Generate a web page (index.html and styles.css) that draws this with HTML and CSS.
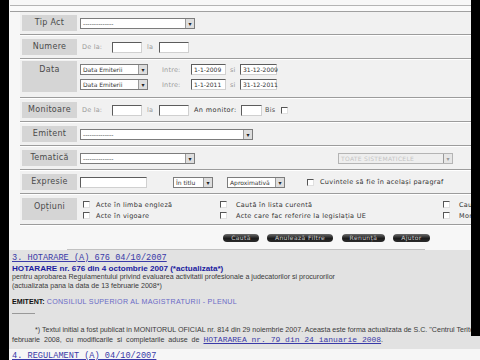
FILE: index.html
```html
<!DOCTYPE html>
<html lang="ro">
<head>
<meta charset="utf-8">
<title>Căutare acte</title>
<link rel="stylesheet" href="styles.css">
</head>
<body>
<div class="edge-right"></div>
<div class="page">
  <div class="top">
    <div class="topbar"></div>
    <div class="form">
      <div class="row">
        <div class="lbl">Tip Act</div>
        <div class="ctl">
          <div class="sel w115"><span class="sv">--------------</span><span class="arr">&#9662;</span></div>
        </div>
      </div>
      <div class="row">
        <div class="lbl">Numere</div>
        <div class="ctl">
          <span class="t t-dela">De la:</span><span class="inp w30"></span>
          <span class="t t-la">la</span><span class="inp w30"></span>
        </div>
      </div>
      <div class="row row-data">
        <div class="lbl lbl-tall">Data</div>
        <div class="ctl ctl-col">
          <div class="sub">
            <div class="sel w68"><span class="sv">Data Emiterii</span><span class="arr">&#9662;</span></div>
            <span class="t t-intre">Intre:</span><span class="inp w35">1-1-2009</span>
            <span class="t t-si">si</span><span class="inp w37">31-12-2009</span>
          </div>
          <div class="sub">
            <div class="sel w68"><span class="sv">Data Emiterii</span><span class="arr">&#9662;</span></div>
            <span class="t t-intre">Intre:</span><span class="inp w35">1-1-2011</span>
            <span class="t t-si">si</span><span class="inp w37">31-12-2011</span>
          </div>
        </div>
      </div>
      <div class="row">
        <div class="lbl">Monitoare</div>
        <div class="ctl">
          <span class="t t-dela">De la:</span><span class="inp w30"></span>
          <span class="t t-la">la</span><span class="inp w30"></span>
          <span class="t t-an">An monitor:</span><span class="inp w21"></span>
          <span class="t t-bis">Bis</span><span class="cb"></span>
        </div>
      </div>
      <div class="row">
        <div class="lbl">Emitent</div>
        <div class="ctl">
          <div class="sel w173"><span class="sv">--------------</span><span class="arr">&#9662;</span></div>
        </div>
      </div>
      <div class="row">
        <div class="lbl">Tematică</div>
        <div class="ctl">
          <div class="sel w115"><span class="sv">--------------</span><span class="arr">&#9662;</span></div>
          <div class="sel sel-off w115 m-sist"><span class="sv">TOATE SISTEMATICELE</span><span class="arr">&#9662;</span></div>
        </div>
      </div>
      <div class="row">
        <div class="lbl">Expresie</div>
        <div class="ctl">
          <span class="inp w67"></span>
          <div class="sel w40 m-titlu"><span class="sv">În titlu</span><span class="arr">&#9662;</span></div>
          <div class="sel w58 m-aprox"><span class="sv">Aproximativă</span><span class="arr">&#9662;</span></div>
          <span class="cb m-cb"></span><span class="t t-par">Cuvintele să fie în același paragraf</span>
        </div>
      </div>
      <div class="row">
        <div class="lbl lbl-opt">Opțiuni</div>
        <div class="ctl opts">
          <div class="opt"><span class="cb"></span><span class="t">Acte în limba engleză</span></div>
          <div class="opt"><span class="cb"></span><span class="t">Caută în lista curentă</span></div>
          <div class="opt"><span class="cb"></span><span class="t">Caută</span></div>
          <div class="opt"><span class="cb"></span><span class="t">Acte în vigoare</span></div>
          <div class="opt"><span class="cb"></span><span class="t">Acte care fac referire la legislația UE</span></div>
          <div class="opt"><span class="cb"></span><span class="t">Mon</span></div>
        </div>
      </div>
      <div class="btns">
        <span class="btn b-cauta">Caută</span>
        <span class="btn b-anul">Anulează Filtre</span>
        <span class="btn b-ren">Renunță</span>
        <span class="btn b-aj">Ajutor</span>
      </div>
    </div>
    <div class="hline"></div>
  </div>
  <div class="results">
    <div class="mono-link">3. HOTARARE (A) 676 04/10/2007</div>
    <div class="title">HOTARARE nr. 676 din 4 octombrie 2007 (*actualizata*)</div>
    <div class="txt">pentru aprobarea Regulamentului privind evaluarea activitatii profesionale a judecatorilor si procurorilor</div>
    <div class="txt">(actualizata pana la data de 13 februarie 2008*)</div>
    <div class="txt emit"><b>EMITENT:</b> <span class="emit-name">CONSILIUL SUPERIOR AL MAGISTRATURII - PLENUL</span></div>
    <div class="short-rule"></div>
    <div class="txt note">*) Textul initial a fost publicat in MONITORUL OFICIAL nr. 814 din 29 noiembrie 2007. Aceasta este forma actualizata de S.C. "Centrul Terito</div>
    <div class="txt note2">februarie 2008, cu modificarile si completarile aduse de <span class="mono-small">HOTARAREA nr. 79 din 24 ianuarie 2008</span>.</div>
  </div>
  <div class="next">
    <div class="mono-link">4. REGULAMENT (A) 04/10/2007</div>
  </div>
</div>
</body>
</html>
```
FILE: styles.css
```css
* { box-sizing: border-box; }
html, body { margin: 0; padding: 0; }
body {
  width: 480px;
  height: 360px;
  overflow: hidden;
  background: #000;
  position: relative;
  font-family: "DejaVu Sans", Verdana, sans-serif;
  color: #333;
}
.edge-right {
  position: absolute;
  top: 0;
  right: 0;
  width: 9px;
  height: 336px;
  background: #000;
  z-index: 5;
}
.page {
  margin-left: 9px;
  width: 471px;
  background: #f4f4f4;
}
.top {
  height: 250px;
  background: #f7f7f7;
  padding-top: 5px;
}
.topbar {
  margin-left: 1px;
  height: 7px;
  border-top: 1px solid #b4b4b4;
  border-bottom: 1px solid #a0a0a0;
  background: #fafafa;
}
.form { margin-left: 11px; background: #f1f1f1; }
.row {
  display: flex;
  align-items: stretch;
  padding: 3px 0 3px 2px;
  border-bottom: 1px solid #9c9c9c;
  box-shadow: 0 1px 0 #ffffff;
  margin-bottom: 1px;
}
.row-data { padding-top: 1px; }
.lbl {
  width: 55px;
  min-height: 16px;
  background: #d5d5d5;
  color: #4a4a4a;
  font-size: 8px;
  letter-spacing: 0.3px;
  line-height: 15px;
  text-align: center;
  flex: none;
}
.lbl-tall { height: 31px; padding-top: 1px; }
.lbl-opt { height: 22px; padding-top: 1px; }
.ctl {
  margin-left: 3px;
  display: flex;
  align-items: center;
  flex: 1;
  min-width: 0;
}
.ctl-col { flex-direction: column; align-items: flex-start; padding-top: 3px; }
.sub { display: flex; align-items: center; height: 11px; margin-bottom: 4px; }
.t {
  font-size: 6.5px;
  color: #9a9a9a;
  white-space: nowrap;
  letter-spacing: 0.2px;
}
.t-dela { width: 32px; padding-left: 2px; }
.t-la { width: 17px; padding-left: 5px; }
.t-intre { width: 43px; padding-left: 14px; }
.t-si { width: 14px; padding-left: 4px; }
.t-an { width: 52px; padding-left: 5px; color: #333; letter-spacing: 0.4px; }
.t-bis { width: 19px; padding-left: 3px; color: #555; }
.t-par { margin-left: 6px; color: #333; letter-spacing: 0.3px; }
.sel {
  height: 11px;
  background: #fff;
  border: 1px solid #7c7c7c;
  display: flex;
  align-items: center;
  flex: none;
  font-size: 6px;
  color: #333;
}
.sv { flex: 1; padding-left: 2px; white-space: nowrap; overflow: hidden; line-height: 9px; }
.arr {
  width: 9px;
  height: 9px;
  background: #dedede;
  border-left: 1px solid #9a9a9a;
  font-size: 6px;
  line-height: 9px;
  text-align: center;
  color: #222;
}
.sel-off { background: #eeeeee; border-color: #b4b4b4; color: #c4c4c4; }
.sel-off .sv { letter-spacing: 0.3px; }
.sel-off .arr { color: #999; background: #e6e6e6; }
.inp {
  height: 11px;
  background: #fff;
  border-top: 1px solid #5c5c5c;
  border-left: 1px solid #5c5c5c;
  border-right: 1px solid #d0d0d0;
  border-bottom: 1px solid #d0d0d0;
  font-size: 6px;
  line-height: 9px;
  padding-left: 2px;
  color: #333;
  flex: none;
  white-space: nowrap;
}
.w115 { width: 115px; }
.w68 { width: 68px; }
.w173 { width: 173px; }
.w30 { width: 30px; }
.w35 { width: 35px; }
.w37 { width: 37px; }
.w21 { width: 21px; }
.w67 { width: 67px; }
.w40 { width: 40px; }
.w58 { width: 58px; }
.m-sist { margin-left: 143px; }
.m-titlu { margin-left: 26px; }
.m-aprox { margin-left: 14px; }
.m-cb { margin-left: 22px; }
.cb {
  width: 7px;
  height: 7px;
  flex: none;
  background: #fff;
  border-top: 1px solid #555;
  border-left: 1px solid #555;
  border-right: 1px solid #e0e0e0;
  border-bottom: 1px solid #e0e0e0;
}
.opts {
  display: grid;
  grid-template-columns: 137px 223px 1fr;
  grid-auto-rows: 11px;
  align-items: center;
  align-content: start;
  padding-left: 3px;
  padding-top: 1px;
}
.opt { display: flex; align-items: center; overflow: hidden; }
.opt .t { margin-left: 6px; color: #333; letter-spacing: 0.3px; }
.opt:nth-child(3n+2) .t, .opt:nth-child(3n) .t { margin-left: 9px; }
.btns {
  display: flex;
  padding: 8px 0 0 203px;
  height: 22px;
  background: #f7f7f7;
}
.btn {
  height: 8px;
  border-radius: 4px;
  background: linear-gradient(#6a6a6a, #1c1c1c 55%, #2a2a2a);
  color: #cfcfcf;
  font-size: 6px;
  line-height: 8px;
  letter-spacing: 0.4px;
  text-align: center;
  white-space: nowrap;
}
.b-cauta { width: 36px; }
.b-anul { width: 66px; margin-left: 8px; }
.b-ren { width: 43px; margin-left: 9px; }
.b-aj { width: 37px; margin-left: 8px; }
.hline {
  margin: 1px 0 0 58px;
  width: 358px;
  height: 2px;
  background: #c2c2c2;
  border-bottom: 1px solid #9a9a9a;
}
.results {
  background: #e2e2e2;
  height: 99px;
  width: 480px;
  padding: 3px 0 0 3px;
  font-family: "Liberation Sans", Arial, sans-serif;
}
.mono-link {
  font-family: "Liberation Mono", "Courier New", monospace;
  font-size: 8.6px;
  line-height: 11px;
  color: #3a3aa8;
  text-decoration: underline;
  white-space: nowrap;
}
.title {
  font-weight: bold;
  font-size: 8.1px;
  line-height: 9px;
  color: #1c1ca0;
  white-space: nowrap;
}
.txt {
  font-size: 7.1px;
  line-height: 9px;
  color: #3a3a3a;
  white-space: nowrap;
}
.emit { margin-top: 7px; }
.emit b { color: #111; }
.emit-name { color: #6a6ac6; letter-spacing: 0.3px; }
.short-rule {
  margin-top: 6px;
  width: 23px;
  height: 1px;
  background: #999;
}
.note { margin-top: 12px; text-indent: 23px; }
.note2 { line-height: 10px; word-spacing: 2px; }
.mono-small {
  font-family: "Liberation Mono", "Courier New", monospace;
  font-size: 8px;
  word-spacing: 0;
  color: #3a3aa8;
  text-decoration: underline;
}
.next {
  background: #f6f6f6;
  width: 480px;
  padding: 2px 0 0 3px;
  height: 20px;
}
```
